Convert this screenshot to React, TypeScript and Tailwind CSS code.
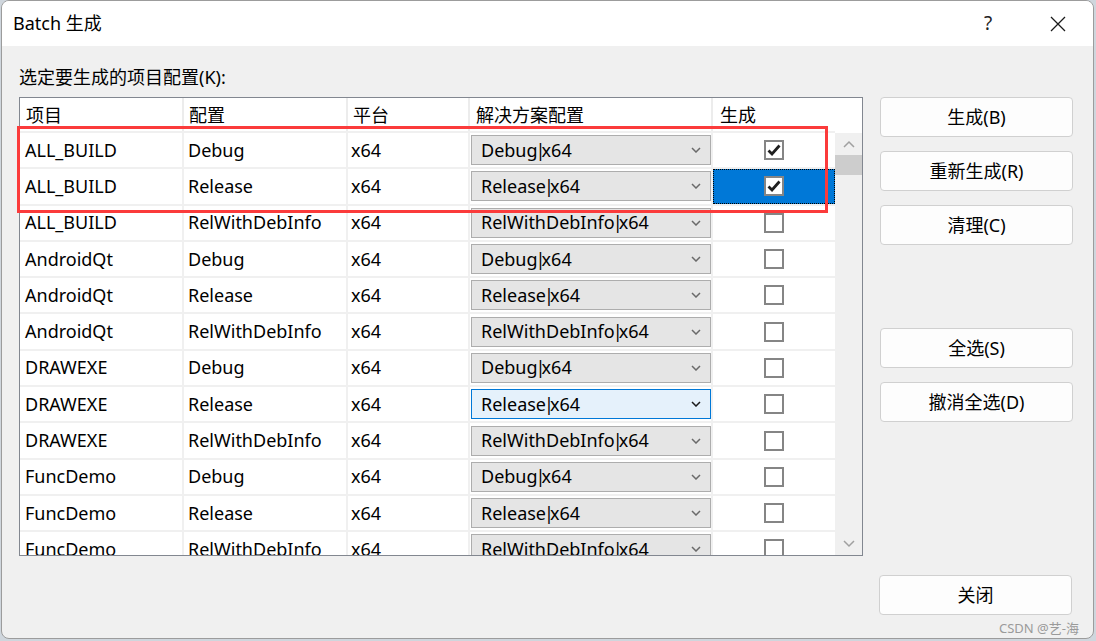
const FONT = { fontFamily: '"Noto Sans", "Noto Sans CJK SC", sans-serif' }

type Row = { project: string; config: string; checked: boolean; selected?: boolean; focused?: boolean }

const rows: Row[] = [
  { project: 'ALL_BUILD', config: 'Debug', checked: true },
  { project: 'ALL_BUILD', config: 'Release', checked: true, selected: true },
  { project: 'ALL_BUILD', config: 'RelWithDebInfo', checked: false },
  { project: 'AndroidQt', config: 'Debug', checked: false },
  { project: 'AndroidQt', config: 'Release', checked: false },
  { project: 'AndroidQt', config: 'RelWithDebInfo', checked: false },
  { project: 'DRAWEXE', config: 'Debug', checked: false },
  { project: 'DRAWEXE', config: 'Release', checked: false, focused: true },
  { project: 'DRAWEXE', config: 'RelWithDebInfo', checked: false },
  { project: 'FuncDemo', config: 'Debug', checked: false },
  { project: 'FuncDemo', config: 'Release', checked: false },
  { project: 'FuncDemo', config: 'RelWithDebInfo', checked: false },
]

function Chevron({ dark }: { dark?: boolean }) {
  return (
    <svg width="10" height="6" viewBox="0 0 10 6" className="shrink-0">
      <polyline points="1,1 5,5 9,1" fill="none" stroke={dark ? '#1a1a1a' : '#6a6a6a'} strokeWidth="1.5" />
    </svg>
  )
}

function CheckBox({ checked }: { checked: boolean }) {
  return (
    <div className="w-[20px] h-[20px] bg-white border-2 border-[#858585] flex items-center justify-center">
      {checked && (
        <svg width="14" height="12" viewBox="0 0 14 12">
          <path d="M1.5 6.5 L5 10 L12.5 1.5" fill="none" stroke="#1f1f1f" strokeWidth="2.8" strokeLinejoin="miter" />
        </svg>
      )}
    </div>
  )
}

function Combo({ value, focused }: { value: string; focused?: boolean }) {
  return (
    <div
      className={
        focused
          ? 'w-[240px] h-[30px] ml-[1px] flex items-center justify-between pl-[9px] pr-[9px] border border-[#0078d7] bg-[#e5f1fb]'
          : 'w-[240px] h-[30px] ml-[1px] flex items-center justify-between pl-[9px] pr-[9px] border border-[#adadad] bg-[#e5e5e5]'
      }
    >
      <span>
        {value}
        <span className="inline-block w-[2px] mx-[1px] text-center overflow-visible">
          <span className="inline-block -ml-[3px]">|</span>
        </span>
        x64
      </span>
      <Chevron dark={focused} />
    </div>
  )
}

function DialogButton({ label }: { label: string }) {
  return (
    <button className="w-[193px] h-[40px] bg-[#fdfdfd] border border-[#d0d0d0] rounded-[4px] text-[18px] text-black flex items-center justify-center">
      {label}
    </button>
  )
}

export default function App() {
  return (
    <div className="w-[1096px] h-[641px] bg-[#cfd6dd] overflow-hidden text-black" style={FONT}>
      <div className="relative w-[1093px] h-[639px] ml-[1px] bg-[#f0f0f0] border border-[#9c9c9c] rounded-[8px] overflow-hidden">
        {/* title bar */}
        <div className="h-[45px] bg-white flex items-center pl-[11px] text-[18px]">
          <span className="flex-1">Batch 生成</span>
          <span className="w-[20px] text-center text-[19px] text-[#222] mr-[52px]">?</span>
          <svg width="16" height="16" viewBox="0 0 16 16" className="mr-[27px]">
            <path d="M1 1 L15 15 M15 1 L1 15" stroke="#1a1a1a" strokeWidth="1.3" />
          </svg>
        </div>

        <div className="pl-[17px] pt-[18px] text-[18px] leading-[26px]">选定要生成的项目配置(K):</div>

        <div className="flex mt-[7px] pl-[17px]">
          {/* grid */}
          <div className="w-[844px] h-[459px] border border-[#828790] bg-white flex overflow-hidden text-[18px]">
            <div className="w-[815px] shrink-0 overflow-hidden">
              <div className="h-[35px] flex border-b-2 border-[#f0f0f0] bg-white">
                <div className="w-[164px] border-r-2 border-[#ececec] pl-[6px] pt-[4px]">项目</div>
                <div className="w-[164px] border-r-2 border-[#ececec] pl-[5px] pt-[4px]">配置</div>
                <div className="w-[122px] border-r-2 border-[#ececec] pl-[5px] pt-[4px]">平台</div>
                <div className="w-[243px] border-r-2 border-[#ececec] pl-[6px] pt-[4px]">解决方案配置</div>
                <div className="w-[122px] pl-[7px] pt-[4px]">生成</div>
              </div>
              {rows.map((r, i) => (
                <div key={i} className="h-[36.3px] flex items-stretch border-b-2 border-[#f0f0f0] shrink-0">
                  <div className="w-[164px] border-r-2 border-[#f0f0f0] pl-[5px] flex items-center">{r.project}</div>
                  <div className="w-[164px] border-r-2 border-[#f0f0f0] pl-[4px] flex items-center">{r.config}</div>
                  <div className="w-[122px] border-r-2 border-[#f0f0f0] pl-[3px] flex items-center">x64</div>
                  <div className="w-[243px] border-r-2 border-[#f0f0f0] flex items-center">
                    <Combo value={r.config} focused={r.focused} />
                  </div>
                  <div
                    className={
                      r.selected
                        ? 'w-[122px] flex items-center justify-center bg-[#0078d7] border border-dotted border-black'
                        : 'w-[122px] flex items-center justify-center'
                    }
                  >
                    <CheckBox checked={r.checked} />
                  </div>
                </div>
              ))}
            </div>
            {/* scrollbar */}
            <div className="w-[27px] shrink-0 bg-[#f0f0f0] flex flex-col">
              <div className="h-[35px] bg-white" />
              <div className="h-[22px] flex items-center justify-center">
                <svg width="12" height="8" viewBox="0 0 12 8">
                  <polyline points="1,7 6,2 11,7" fill="none" stroke="#a0a0a0" strokeWidth="1.5" />
                </svg>
              </div>
              <div className="h-[20px] bg-[#cdcdcd]" />
              <div className="flex-1" />
              <div className="h-[22px] flex items-center justify-center">
                <svg width="12" height="8" viewBox="0 0 12 8">
                  <polyline points="1,1 6,6 11,1" fill="none" stroke="#a0a0a0" strokeWidth="1.5" />
                </svg>
              </div>
            </div>
          </div>

          {/* buttons */}
          <div className="ml-[17px] flex flex-col">
            <div className="flex flex-col gap-[14px]">
              <DialogButton label="生成(B)" />
              <DialogButton label="重新生成(R)" />
              <DialogButton label="清理(C)" />
            </div>
            <div className="flex flex-col gap-[14px] mt-[83px]">
              <DialogButton label="全选(S)" />
              <DialogButton label="撤消全选(D)" />
            </div>
          </div>
        </div>

        <div className="flex justify-end pr-[21px] mt-[19px]">
          <DialogButton label="关闭" />
        </div>
        <div className="flex justify-end pr-[14px] mt-[3px] text-[13px] text-[#9a9a9a] leading-[20px]">CSDN @艺-海</div>

        {/* annotation */}
        <div className="absolute left-[15px] top-[125px] w-[811px] h-[87px] border-[3px] border-[#fb3b3b] pointer-events-none" />
      </div>
    </div>
  )
}
